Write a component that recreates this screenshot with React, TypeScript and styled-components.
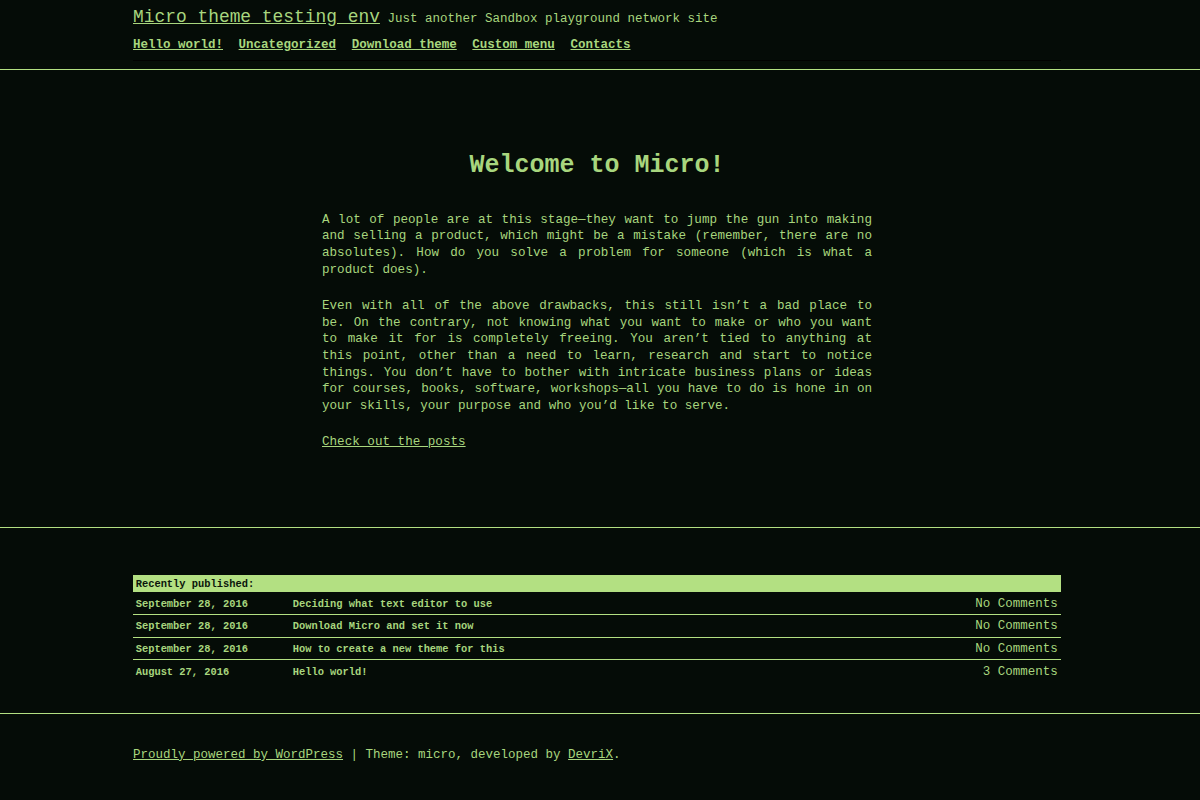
import React from "react";
import styled, { createGlobalStyle } from "styled-components";

const BG = "#050c07";
const FG = "#a8d67e";
const BAR = "#b3e082";

const Global = createGlobalStyle`
  html, body { margin: 0; padding: 0; }
  body {
    background: ${BG};
    color: ${FG};
    font-family: "Liberation Mono", "Courier New", monospace;
    font-size: 12.6px;
    line-height: 16.7px;
  }
  a { color: ${FG}; }
`;

const Wrap = styled.div`
  width: 928px;
  margin: 0 139px 0 133px;
`;

const Header = styled.header`
  border-bottom: 1px solid ${BAR};
  padding: 5px 0 8px;
`;

const TitleRow = styled.div`
  display: flex;
  align-items: baseline;
  gap: 7.5px;
`;

const SiteTitle = styled.a`
  font-size: 17.9px;
  line-height: 24px;
  text-decoration: underline;
`;

const Tagline = styled.span`
  font-size: 12.5px;
`;

const Nav = styled.nav`
  display: flex;
  gap: 15.6px;
  margin-top: 7.7px;
  padding-bottom: 6.7px;
  border-bottom: 1px solid #000;
`;

const NavLink = styled.a`
  font-weight: bold;
  font-size: 12.5px;
  text-decoration: underline;
`;

const Main = styled.main`
  border-bottom: 1px solid ${BAR};
  padding: 81px 0 76.5px;
`;

const Content = styled.article`
  width: 550px;
  margin: 0 auto;
`;

const Heading = styled.h1`
  margin: 0 0 30.7px;
  font-size: 25px;
  line-height: 30px;
  font-weight: bold;
  text-align: center;
`;

const Para = styled.p`
  margin: 0 0 19.3px;
  text-align: justify;
  &:last-child { margin-bottom: 0; }
`;

const Recent = styled.section`
  border-bottom: 1px solid ${BAR};
  padding: 47px 0 31px;
`;

const Bar = styled.div`
  background: ${BAR};
  color: #0b150b;
  font-weight: bold;
  font-size: 10.4px;
  height: 17px;
  line-height: 19px;
  padding: 0 2.7px;
`;

const Row = styled.div<{ $last?: boolean }>`
  display: grid;
  grid-template-columns: 159.7px 1fr auto;
  align-items: baseline;
  padding: 3.25px 3.3px 1.75px 0;
  font-size: 12.5px;
  border-bottom: ${(p) => (p.$last ? "none" : `1px solid ${BAR}`)};
`;

const DateCell = styled.span`
  font-weight: bold;
  font-size: 10.4px;
  padding-left: 2.7px;
`;

const PostTitle = styled.a`
  font-weight: bold;
  font-size: 10.4px;
  text-decoration: none;
`;

const Comments = styled.a`
  text-decoration: none;
  text-align: right;
`;

const Footer = styled.footer`
  padding: 32.7px 0 36px;
  font-size: 12.5px;
`;

const posts = [
  { date: "September 28, 2016", title: "Deciding what text editor to use", c: "No Comments" },
  { date: "September 28, 2016", title: "Download Micro and set it now", c: "No Comments" },
  { date: "September 28, 2016", title: "How to create a new theme for this", c: "No Comments" },
  { date: "August 27, 2016", title: "Hello world!", c: "3 Comments" },
];

export default function App() {
  return (
    <>
      <Global />
      <Header>
        <Wrap>
          <TitleRow>
            <SiteTitle href="#">Micro theme testing env</SiteTitle>
            <Tagline>Just another Sandbox playground network site</Tagline>
          </TitleRow>
          <Nav>
            {["Hello world!", "Uncategorized", "Download theme", "Custom menu", "Contacts"].map((n) => (
              <NavLink key={n} href="#">{n}</NavLink>
            ))}
          </Nav>
        </Wrap>
      </Header>
      <Main>
        <Wrap>
          <Content>
            <Heading>Welcome to Micro!</Heading>
            <Para>
              A lot of people are at this stage—they want to jump the gun into making and selling a product, which might be a mistake (remember, there are no absolutes). How do you solve a problem for someone (which is what a product does).
            </Para>
            <Para>
              Even with all of the above drawbacks, this still isn’t a bad place to be. On the contrary, not knowing what you want to make or who you want to make it for is completely freeing. You aren’t tied to anything at this point, other than a need to learn, research and start to notice things. You don’t have to bother with intricate business plans or ideas for courses, books, software, workshops—all you have to do is hone in on your skills, your purpose and who you’d like to serve.
            </Para>
            <Para>
              <a href="#">Check out the posts</a>
            </Para>
          </Content>
        </Wrap>
      </Main>
      <Recent>
        <Wrap>
          <Bar>Recently published:</Bar>
          {posts.map((p, i) => (
            <Row key={i} $last={i === posts.length - 1}>
              <DateCell>{p.date}</DateCell>
              <PostTitle href="#">{p.title}</PostTitle>
              <Comments href="#">{p.c}</Comments>
            </Row>
          ))}
        </Wrap>
      </Recent>
      <Footer>
        <Wrap>
          <a href="#">Proudly powered by WordPress</a> | Theme: micro, developed by <a href="#">DevriX</a>.
        </Wrap>
      </Footer>
    </>
  );
}
